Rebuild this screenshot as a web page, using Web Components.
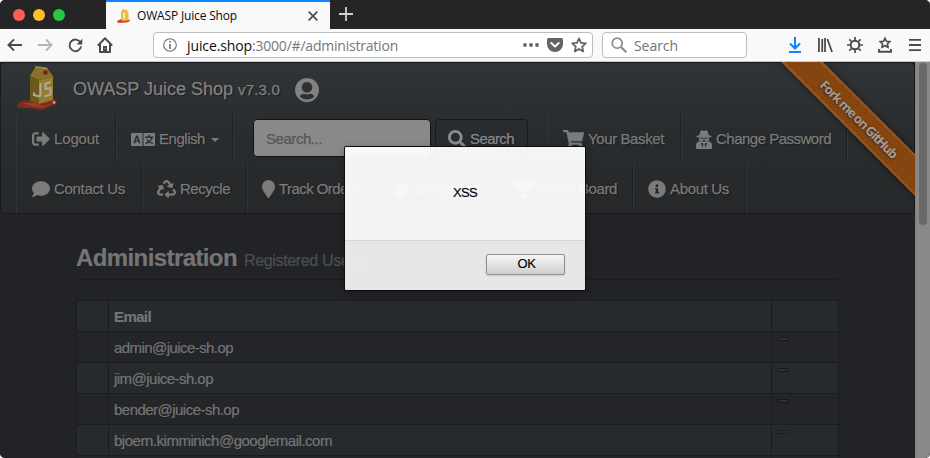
<!DOCTYPE html>
<html lang="en">
<head>
<meta charset="utf-8">
<title>OWASP Juice Shop</title>
<style>
html,body{margin:0;height:458px;overflow:hidden;background:#fff;font-family:"Liberation Sans",Arial,sans-serif}
</style>
</head>
<body>
<browser-window></browser-window>
<script>
const ICONS = {
  search:['0 0 512 512','<path d="M505 442.7L405.3 343c-4.500-4.500-10.600-7-17-7H372c27.600-35.300 44-79.700 44-128C416 93.100 322.900 0 208 0S0 93.100 0 208s93.100 208 208 208c48.300 0 92.700-16.400 128-44v16.300c0 6.400 2.500 12.500 7 17l99.700 99.700c9.400 9.400 24.600 9.400 33.900 0l28.300-28.300c9.400-9.400 9.400-24.600.1-34zM208 336c-70.700 0-128-57.200-128-128 0-70.700 57.200-128 128-128 70.700 0 128 57.200 128 128 0 70.700-57.200 128-128 128z"/>'],
  comment:['0 0 512 512','<path d="M256 32C114.600 32 0 125.100 0 240c0 49.600 21.400 95 57 130.700C44.500 421.100 2.700 466 2.200 466.500c-2.200 2.300-2.800 5.700-1.500 8.700S4.800 480 8 480c66.300 0 116-31.800 140.600-51.400 32.700 12.300 69 19.400 107.400 19.400 141.400 0 256-93.100 256-208S397.400 32 256 32z"/>'],
  cart:['0 0 576 512','<path d="M528.12 301.319l47.273-208C578.806 78.301 567.391 64 551.99 64H159.208l-9.166-44.81C147.758 8.021 137.93 0 126.529 0H24C10.745 0 0 10.745 0 24v16c0 13.255 10.745 24 24 24h69.883l70.248 343.435C147.325 417.1 136 435.222 136 456c0 30.928 25.072 56 56 56s56-25.072 56-56c0-15.674-6.447-29.835-16.824-40h209.647C430.447 426.165 424 440.326 424 456c0 30.928 25.072 56 56 56s56-25.072 56-56c0-22.172-12.888-41.332-31.579-50.405l5.517-24.276c3.413-15.018-8.002-29.319-23.403-29.319H218.117l-6.545-32h293.145c11.206 0 20.92-7.754 23.403-18.681z"/>'],
  info:['0 0 512 512','<path d="M256 8C119.043 8 8 119.083 8 256c0 136.997 111.043 248 248 248s248-111.003 248-248C504 119.083 392.957 8 256 8zm0 110c23.196 0 42 18.804 42 42s-18.804 42-42 42-42-18.804-42-42 18.804-42 42-42zm56 254c0 6.627-5.373 12-12 12h-88c-6.627 0-12-5.373-12-12v-24c0-6.627 5.373-12 12-12h12v-64h-12c-6.627 0-12-5.373-12-12v-24c0-6.627 5.373-12 12-12h64c6.627 0 12 5.373 12 12v100h12c6.627 0 12 5.373 12 12v24z"/>'],
  marker:['0 0 384 512','<path d="M172.268 501.67C26.97 291.031 0 269.413 0 192 0 85.961 85.961 0 192 0s192 85.961 192 192c0 77.413-26.97 99.031-172.268 309.67-9.535 13.774-29.93 13.773-39.464 0z"/>'],
  logout:['0 0 512 512','<path d="M497 273L329 441c-15 15-41 4.500-41-17v-96H152c-13.300 0-24-10.700-24-24v-96c0-13.300 10.700-24 24-24h136V88c0-21.400 25.900-32 41-17l168 168c9.300 9.400 9.300 24.600 0 34zM192 436v-40c0-6.600-5.400-12-12-12H96c-17.700 0-32-14.300-32-32V160c0-17.700 14.300-32 32-32h84c6.600 0 12-5.400 12-12V76c0-6.600-5.400-12-12-12H96c-53 0-96 43-96 96v192c0 53 43 96 96 96h84c6.600 0 12-5.400 12-12z"/>'],
  trophy:['0 0 576 512','<path d="M552 64H448V24c0-13.300-10.700-24-24-24H152c-13.300 0-24 10.700-24 24v40H24C10.700 64 0 74.700 0 88v56c0 35.700 22.500 72.400 61.900 100.700 31.500 22.700 69.800 37.100 110 41.700C203.300 338.500 240 360 240 360v72h-48c-35.300 0-64 20.700-64 56v12c0 6.600 5.400 12 12 12h296c6.600 0 12-5.400 12-12v-12c0-35.300-28.700-56-64-56h-48v-72s36.700-21.500 68.100-73.600c40.300-4.600 78.600-19 110-41.700 39.300-28.300 61.900-65 61.900-100.700V88c0-13.300-10.700-24-24-24zM99.300 192.800C74.900 175.200 64 155.600 64 144v-16h64.200c1 32.600 5.800 61.200 12.800 86.200-15.100-5.200-29.200-12.400-41.700-21.400zM512 144c0 16.100-17.700 36.100-35.300 48.800-12.500 9-26.700 16.200-41.800 21.400 7-25 11.800-53.600 12.800-86.200H512v16z"/>'],
  recycle:['0 0 512 512','<path d="M184.561 261.903c3.232 13.997-12.123 24.635-24.068 17.168l-40.736-25.455-50.867 81.402C55.606 356.273 70.96 384 96.012 384H148c6.627 0 12 5.373 12 12v40c0 6.627-5.373 12-12 12H96.115c-75.334 0-121.302-83.048-81.408-146.88l50.822-81.388-40.725-25.448c-12.081-7.547-8.966-25.961 4.879-29.158l110.237-25.45c8.611-1.988 17.201 3.381 19.189 11.99l25.452 110.237zm98.561-182.915l41.289 66.076-40.74 25.457c-12.051 7.528-9 25.953 4.879 29.158l110.237 25.45c8.672 1.999 17.215-3.438 19.189-11.99l25.45-110.237c3.197-13.844-11.99-24.719-24.068-17.168l-40.687 25.424-41.263-66.082c-37.521-60.033-125.209-60.171-162.816 0l-17.963 28.766c-3.51 5.62-1.8 13.021 3.82 16.533l33.919 21.195c5.62 3.512 13.024 1.803 16.536-3.817l17.961-28.743c12.712-20.341 41.973-19.676 54.257-.022zM497.288 301.12l-27.515-44.065c-3.511-5.623-10.916-7.334-16.538-3.821l-33.861 21.159c-5.62 3.512-7.33 10.915-3.818 16.536l27.564 44.112c13.257 21.211-2.057 48.96-27.136 48.96H320V336.02c0-14.213-17.242-21.383-27.313-11.313l-80 79.981c-6.249 6.248-6.249 16.379 0 22.627l80 79.989C302.689 517.308 320 510.3 320 495.989V448h95.88c75.274 0 121.335-82.997 81.408-146.88z"/>'],
  bomb:['0 0 18 18','<circle cx="7.500" cy="11" r="7"/><path d="M10 4l2-2 4 4-2 2zM13 3.500l1.500-1.500 1 1L14 4.500zM15.500 0l.5 1.500L17.500 2 16 2.500 15.500 4 15 2.500 13.500 2 15 1.500z"/>'],
  secret:['0 0 16 19','<path fill-rule="evenodd" d="M3.300 5.200L4.600.9Q5.200-.1 6.500.6L8 1.200 9.500.6Q10.800-.1 11.400.9l1.300 4.300q3 .4 3 1.200 0 1.300-7.700 1.300T.3 6.400q0-.8 3-1.200z"/><path d="M3 8.300q5 .7 10 0v1.700q-.3 1.500-2 1.500-1.500 0-2-1.500H7q-.5 1.500-2 1.500-1.700 0-2-1.500z"/><path fill-rule="evenodd" d="M2.500 11.500h11Q16 12.500 16 15.500V18q0 1-1 1H1q-1 0-1-1v-2.500Q0 12.500 2.500 11.500zM5 13l1.500 5L7.300 14.800 6.700 13zM11 13l-1.500 5-.8-3.200.6-1.800z"/>'],
  language:['0 0 24 13','<path fill-rule="evenodd" d="M1 0H11.500V13H1Q0 13 0 12V1Q0 0 1 0zM5.100 2.500L2.400 10.200h1.700l.5-1.700h2.700l.5 1.700h1.700L6.800 2.500zM5.950 4.300L6.900 7.300H5zM12.500 0H23q1 0 1 1V12q0 1-1 1H12.500z"/><path d="M18.200 2v2M14.200 4.300h8M21 4.800Q19.500 8.700 14.800 10.500M15.800 6.500Q17.600 9.500 21.800 10.500" stroke="#27292b" stroke-width="1.400" fill="none"/>'],
  user:['0 0 24 24','<path fill-rule="evenodd" d="M12 0a12 12 0 1 0 .01 0zM12 4a5.300 5.300 0 1 1-.01 0zM4.600 18.300q1.600-2.500 4-2.500 3.400 1.300 6.800 0 2.400 0 4 2.500a9.900 9.900 0 0 1-14.800 0z"/>'],
  back:['0 0 17 15','<path d="M16 7.500H2M7.500 1.500l-6 6 6 6" fill="none" stroke="currentColor" stroke-width="2"/>'],
  forward:['0 0 17 15','<path d="M1 7.500h14M9.500 1.500l6 6-6 6" fill="none" stroke="currentColor" stroke-width="2"/>'],
  reload:['0 0 16 16','<path d="M13.200 4.600A6.200 6.200 0 1 0 14 9" fill="none" stroke="currentColor" stroke-width="2"/><path d="M15.200 0.800V6.900H9.100z"/>'],
  home:['0 0 16 16','<path d="M.8 8.600L8 1.300l7.200 7.300M3 7v8h10V7" fill="none" stroke="currentColor" stroke-width="2" stroke-linejoin="round"/><path fill-rule="evenodd" d="M6 9h4v6H6zM7.700 11.300h.8v.8h-.8z"/>'],
  i:['0 0 14 14','<circle cx="7" cy="7" r="6.300" fill="none" stroke="currentColor" stroke-width="1.100"/><path d="M6.200 3h1.600v1.600H6.200zM6.200 6h1.600v5H6.200z"/>'],
  dots:['0 0 16 4','<circle cx="2" cy="2" r="1.900"/><circle cx="8" cy="2" r="1.900"/><circle cx="14" cy="2" r="1.900"/>'],
  pocket:['0 0 16 14','<path d="M1.500 0h13Q16 0 16 1.500V6A8 8 0 0 1 0 6V1.500Q0 0 1.500 0z"/><path d="M4.300 5L8 8.600 11.700 5" fill="none" stroke="#fff" stroke-width="2" stroke-linecap="round" stroke-linejoin="round"/>'],
  star:['0 0 16 16','<path d="M8 1.400l2 4.400 4.800.5-3.600 3.300 1 4.800L8 12l-4.200 2.400 1-4.800L1.200 6.300 6 5.800z" fill="none" stroke="currentColor" stroke-width="1.800" stroke-linejoin="round"/>'],
  lens:['0 0 16 16','<circle cx="6.200" cy="6.200" r="5" fill="none" stroke="currentColor" stroke-width="1.700"/><path d="M10 10l5.300 5.300" stroke="currentColor" stroke-width="2.200"/>'],
  down:['0 0 12 16','<path d="M6 0v11M1 6.500l5 5 5-5M0 15h12" fill="none" stroke="currentColor" stroke-width="2"/>'],
  library:['0 0 16 14','<path d="M1 0v14M4.500 1v13M7.500 0v14M10 1l5 13" fill="none" stroke="currentColor" stroke-width="1.900"/>'],
  gear:['0 0 16 16','<circle cx="8" cy="8" r="4.300" fill="none" stroke="currentColor" stroke-width="2"/><path d="M8 0v3M8 13v3M0 8h3M13 8h3M2.300 2.300l2.200 2.200M11.500 11.500l2.200 2.200M2.300 13.700l2.200-2.200M11.500 4.500l2.200-2.200" stroke="currentColor" stroke-width="1.700"/>'],
  tray:['0 0 14 16','<path d="M7 1.300l1.500 3 3.300.4-2.400 2.300.6 3.200L7 8.700 4 10.200 4.600 7 2.200 4.700l3.300-.4z" fill="none" stroke="currentColor" stroke-width="1.600"/><path d="M1 12v2.700h12V12" fill="none" stroke="currentColor" stroke-width="1.900"/>'],
  menu:['0 0 12 13','<path d="M0 1h12M0 6.500h12M0 12h12" stroke="currentColor" stroke-width="1.900"/>'],
  close:['0 0 10 10','<path d="M.7.700l8.600 8.600M9.300.7L.7 9.300" stroke="currentColor" stroke-width="1.700"/>'],
  plus:['0 0 14 14','<path d="M7 0v14M0 7h14" stroke="currentColor" stroke-width="1.800"/>'],
  juice:['0 0 40 44','<path d="M1 38Q3 34 10 34.500l16-.5q9-3 13 0 2 3-1 4.500-4 1-7 3-5 3-10 2-7-2-12-1.500-7 .5-9-1.500-1-1.500 1-2.500z" fill="#7f2c1b"/><path d="M6 37Q18 36 23 39T36 36Q32 41 25 41.500T6 37z" fill="#9b3f26"/><circle cx="37" cy="36.500" r="1.400" fill="#b4a9a0"/><path d="M13 10L22 14v24l-9-3z" fill="#6d581c"/><path d="M22 14l14-4v24l-14 4z" fill="#967b2b"/><path d="M13 10L18 1.500 31 3.500 36 10 22 14z" fill="#8a712a"/><path d="M18 0l12 1.500 1 2.500-13-2.500z" fill="#a38a43"/><circle cx="28.500" cy="6.500" r="2.200" fill="#801a12"/><path d="M23.500 17v11q0 3-3 2l-3.500-1v-2.500M34 16l-5.500 1.500v5.500l5-1v6.500l-6 2" fill="none" stroke="#aaa6a0" stroke-width="2.200"/>']
};

function define(name, css, html, ready) {
  customElements.define(name, class extends HTMLElement {
    connectedCallback() {
      if (this.shadowRoot) return;
      const root = this.attachShadow({mode:'open'});
      const body = typeof html === 'function' ? html(this) : html;
      root.innerHTML = `<style>*{box-sizing:border-box}${css}</style>${body}`;
      if (ready) ready(this, root);
    }
  });
}

/* Inline icon: name, w, h */
define('ui-icon', ':host{display:block;flex:none;line-height:0}svg{display:block;fill:currentColor;overflow:visible}',
  e => { const [box, art] = ICONS[e.getAttribute('name')];
    return `<svg width="${e.getAttribute('w')}" height="${e.getAttribute('h')}" viewBox="${box}" preserveAspectRatio="none">${art}</svg>`; });

/* One line of text whose tracking is adjusted to occupy w pixels */
define('fit-text', ':host{display:block;flex:none;white-space:nowrap}span{display:inline-block}',
  e => `<span>${e.getAttribute('text')}</span>`,
  (e, r) => { const s = r.querySelector('span'), w = +e.getAttribute('w');
    const n = parseFloat(getComputedStyle(s).width);
    s.style.letterSpacing = ((w - n) / s.textContent.length).toFixed(3) + 'px';
    e.style.width = w + 'px'; });

define('tab-strip', `
:host{display:flex;height:29px;background:#252525;flex:none}
.lights{width:106px;display:flex;gap:8px;padding:9px 0 0 13px}
.lights i{width:12px;height:12px;border-radius:50%}
.tab{width:224px;background:#f9f9fa;border-top:2px solid #0a84ff;display:flex;align-items:center;padding:0 12px 0 11px;font:12px/16px "Open Sans","Noto Sans",sans-serif;color:#0c0c0d}
.tab fit-text{margin:0 auto 0 7px}
.plus{color:#d0d0d0;padding:7px 0 0 9px}`,
`<div class="lights"><i style="background:#ff5f57"></i><i style="background:#ffbd2e"></i><i style="background:#28c840"></i></div>
<div class="tab"><svg width="13" height="14" viewBox="0 0 13 14"><path d="M0 12l4-2 8 .5 1 1.500-3 1.500-9 .5z" fill="#d9442b"/><path d="M4 3l2-3 4 1 1.500 3v7L7 12l-3-1z" fill="#e9bd3f"/><path d="M6 4l2-.5V10L6 9.500z" fill="#f5e6a9"/></svg>
<fit-text w="100" text="OWASP Juice Shop"></fit-text><ui-icon name="close" w="10" h="10" style="color:#4c4c4f"></ui-icon></div>
<ui-icon class="plus" name="plus" w="14" h="14"></ui-icon>`);

define('nav-toolbar', `
:host{display:flex;align-items:center;height:33px;flex:none;background:#f9f9fa;border-bottom:1px solid #c9cacb;color:#4a4a4d;padding:0 9px 0 7px;font:14px/20px "Open Sans","Noto Sans",sans-serif}
.field{height:26px;border:1px solid #bdbdbf;border-radius:4px;background:#fff;display:flex;align-items:center}
.url{width:440px;margin-left:40px;padding:0 5px 0 9px;color:#0c0c0d}
.find{width:145px;margin-left:9px;padding:0 8px;color:#8b8b8d}
.field fit-text{position:relative;top:1px}
.actions{display:flex;align-items:center;margin-left:auto}`,
`<ui-icon name="back" w="16" h="14"></ui-icon>
<ui-icon name="forward" w="16" h="14" style="color:#b6b6b8;margin-left:14px"></ui-icon>
<ui-icon name="reload" w="15" h="15" style="margin-left:15px"></ui-icon>
<ui-icon name="home" w="16" h="16" style="margin-left:14px"></ui-icon>
<div class="field url"><ui-icon name="i" w="14" h="14" style="color:#6b6b6d"></ui-icon>
<fit-text w="65" text="juice.shop" style="margin-left:10px"></fit-text><fit-text w="146" text=":3000/#/administration" style="color:#77777a"></fit-text>
<ui-icon name="dots" w="16" h="4" style="margin-left:auto;color:#646466"></ui-icon>
<ui-icon name="pocket" w="16" h="14" style="margin-left:8px;color:#646466"></ui-icon>
<ui-icon name="star" w="16" h="16" style="margin-left:8px;color:#646466"></ui-icon></div>
<div class="field find"><ui-icon name="lens" w="16" h="16"></ui-icon><fit-text w="44" text="Search" style="margin-left:7px;color:#737375"></fit-text></div>
<div class="actions"><ui-icon name="down" w="12" h="16" style="color:#0a84ff"></ui-icon>
<ui-icon name="library" w="15" h="14" style="margin-left:17px"></ui-icon>
<ui-icon name="gear" w="16" h="16" style="margin-left:14px"></ui-icon>
<ui-icon name="tray" w="14" h="16" style="margin-left:15px"></ui-icon>
<ui-icon name="menu" w="12" h="12" style="margin-left:17px"></ui-icon></div>`);

/* Navbar entry: box width, icon, label */
define('nav-item', `:host{display:flex;align-items:center;height:50px;padding:2px 0 0 15px;border-right:1px solid #1e2022;box-shadow:1px 0 #323538;flex:none}
:host([bare]){border:0;box-shadow:none}
fit-text{margin-left:4px}b{margin:2px 0 0 6px;border:4px solid transparent;border-top-color:currentColor;border-bottom:0}`,
e => { const a = n => e.getAttribute(n);
  e.style.width = a('box') + 'px';
  return `<ui-icon name="${a('icon')}" w="${a('iw')}" h="${a('ih')}"></ui-icon><fit-text w="${a('tw')}" text="${a('label')}"></fit-text>${e.hasAttribute('caret') ? '<b></b>' : ''}`; });

define('fork-ribbon', `:host{position:absolute;left:729px;top:42px;width:260px;height:30px;transform:rotate(45deg);background:#854511;box-shadow:0 0 5px #0009;display:flex;align-items:center;justify-content:center;color:#a09d97;font:bold 13px/20px "Open Sans","Noto Sans",sans-serif;text-shadow:0 1px 2px #3b1c05}
:host::before{content:"";position:absolute;inset:1px 0;border:solid #99673a;border-width:1px 0}`,
`<fit-text w="103" text="Fork me on GitHub"></fit-text>`);

define('shop-navbar', `:host{display:block;height:152px;border:1px solid #191a1c;border-radius:4px;background:linear-gradient(#303437,#292c2e 50%,#26282a);flex:none;color:#7b7b7b;font-size:15px;line-height:20px;text-shadow:1px 1px 1px #17181a;-webkit-text-stroke:.25px}
.brand{height:50px;display:flex;align-items:center;padding-left:16px}
.row{display:flex;margin-left:15px;border-left:1px solid #323538;height:50px}
.input{width:178px;height:38px;margin:6px 4px 0 20px;border:1px solid #101112;border-radius:4px;background:#898989;padding:9px 0 0 12px;color:#545759;text-shadow:none;flex:none}
.button{width:93px;height:38px;margin:6px 20px 0 0;border:1px solid #17191a;border-radius:4px;background:#292c2f;display:flex;align-items:center;padding:2px 0 0 12px;gap:4px;color:#8b8b8b;flex:none}
.cart{box-shadow:-1px 0 #323538,1px 0 #323538}`,
`<div class="brand"><ui-icon name="juice" w="40" h="44"></ui-icon>
<fit-text w="160" text="OWASP Juice Shop" style="font-size:18px;margin:2px 0 0 16px;color:#828282"></fit-text>
<fit-text w="42" text="v7.3.0" style="margin:4px 0 0 5px;color:#828282"></fit-text>
<ui-icon name="user" w="24" h="24" style="margin:4px 0 0 15px;color:#828282"></ui-icon></div>
<div class="row">
<nav-item box="99" icon="logout" iw="18" ih="18" tw="45" label="Logout"></nav-item>
<nav-item box="117" icon="language" iw="24" ih="13" tw="46" label="English" caret></nav-item>
<div class="input"><fit-text w="56" text="Search..."></fit-text></div>
<div class="button"><ui-icon name="search" w="18" h="18"></ui-icon><fit-text w="44" text="Search"></fit-text></div>
<nav-item class="cart" box="133" icon="cart" iw="21" ih="18" tw="76" label="Your Basket"></nav-item>
<nav-item box="166" icon="secret" iw="16" ih="19" tw="115" label="Change Password"></nav-item></div>
<div class="row">
<nav-item box="125" icon="comment" iw="18" ih="18" tw="71" label="Contact Us"></nav-item>
<nav-item box="105" icon="recycle" iw="19" ih="18" tw="50" label="Recycle"></nav-item>
<nav-item box="131" icon="marker" iw="13" ih="18" tw="80" label="Track Orders"></nav-item>
<nav-item box="121" icon="bomb" iw="18" ih="18" tw="67" label="Complain?"></nav-item>
<nav-item box="134" icon="trophy" iw="20" ih="18" tw="79" label="Score Board"></nav-item>
<nav-item box="113" icon="info" iw="18" ih="18" tw="59" label="About Us"></nav-item></div>`);

define('user-row', `:host{display:grid;grid-template-columns:32px 663px 68px;height:31px;border:solid #1b1c1e;border-width:1px 0 0;background:#242528}
:host([alt]){background:#272a2c}:host([head]){font-weight:bold}
div{border-left:1px solid #1b1c1e;padding:5px 0 0 5px;height:30px}div:last-child{border-right:1px solid #1b1c1e}
i{display:block;width:12px;height:4px;border:1px solid #17181a;border-radius:2px;background:#2d2f31}`,
e => `<div></div><div><fit-text w="${e.getAttribute('tw')}" text="${e.getAttribute('email')}"></fit-text></div><div>${e.hasAttribute('head') ? '' : '<i></i>'}</div>`);

define('admin-panel', `:host{display:block;padding:26px 0 0 76px;color:#757575;font-size:15px;line-height:22px;-webkit-text-stroke:.2px}
h1{display:flex;align-items:baseline;margin:0 0 20px;width:763px;height:40px;border-bottom:1px solid #1b1c1e;font-size:24px;line-height:36px;letter-spacing:0}
small{font-weight:normal;font-size:16px;color:#4b5053;margin-left:7px}
section{width:763px}`,
`<h1><fit-text w="161" text="Administration"></fit-text><small><fit-text w="118" text="Registered Users"></fit-text></small></h1>
<section><user-row head alt tw="37" email="Email"></user-row><user-row tw="119" email="admin@juice-sh.op"></user-row><user-row alt tw="99" email="jim@juice-sh.op"></user-row><user-row tw="125" email="bender@juice-sh.op"></user-row><user-row alt tw="218" email="bjoern.kimminich@googlemail.com"></user-row><user-row tw="10" email="&nbsp;"></user-row></section>`);

define('alert-dialog', `:host{position:absolute;left:345px;top:85px;width:240px;height:143px;display:flex;flex-direction:column;background:#fdfdfdf4;box-shadow:0 0 0 1px #0d0d0e,0 2px 8px #0005;border-radius:1px;color:#000;font-size:13px;line-height:16px;-webkit-text-stroke:.15px}
main{height:94px;flex:none;border-bottom:1px solid #d6d6d6;display:flex;justify-content:center;padding-top:38px}
footer{flex:1;background:#0000000c;display:flex;justify-content:flex-end;padding:13px 20px 0 0}
button{width:79px;height:21px;padding:0 0 1px 2px;border:1px solid #909090;border-radius:2px;background:linear-gradient(#f6f6f6,#cfcfcf);display:flex;justify-content:center;align-items:center;font:inherit;color:#000;box-shadow:0 1px 2px #0002}`,
`<main><fit-text w="24" text="XSS"></fit-text></main><footer><button><fit-text w="18" text="OK"></fit-text></button></footer>`);

define('page-view', `:host{display:flex;position:relative;height:396px;overflow:hidden;background:#222326}
.content{position:relative;width:915px;height:396px;overflow:hidden;flex:none}
.bar{width:15px;background:#898989;border-left:1px solid #808080;padding:1px 0 0 3px}
.bar i{display:block;width:8px;height:162px;border-radius:4px;background:#696969}`,
`<div class="content"><shop-navbar></shop-navbar><admin-panel></admin-panel><fork-ribbon></fork-ribbon></div><div class="bar"><i></i></div><alert-dialog></alert-dialog>`);

define('browser-window', `:host{display:flex;flex-direction:column;width:930px;height:458px;overflow:hidden;border-radius:5px;background:#222326}`,
`<tab-strip></tab-strip><nav-toolbar></nav-toolbar><page-view></page-view>`);
</script>
</body>
</html>
